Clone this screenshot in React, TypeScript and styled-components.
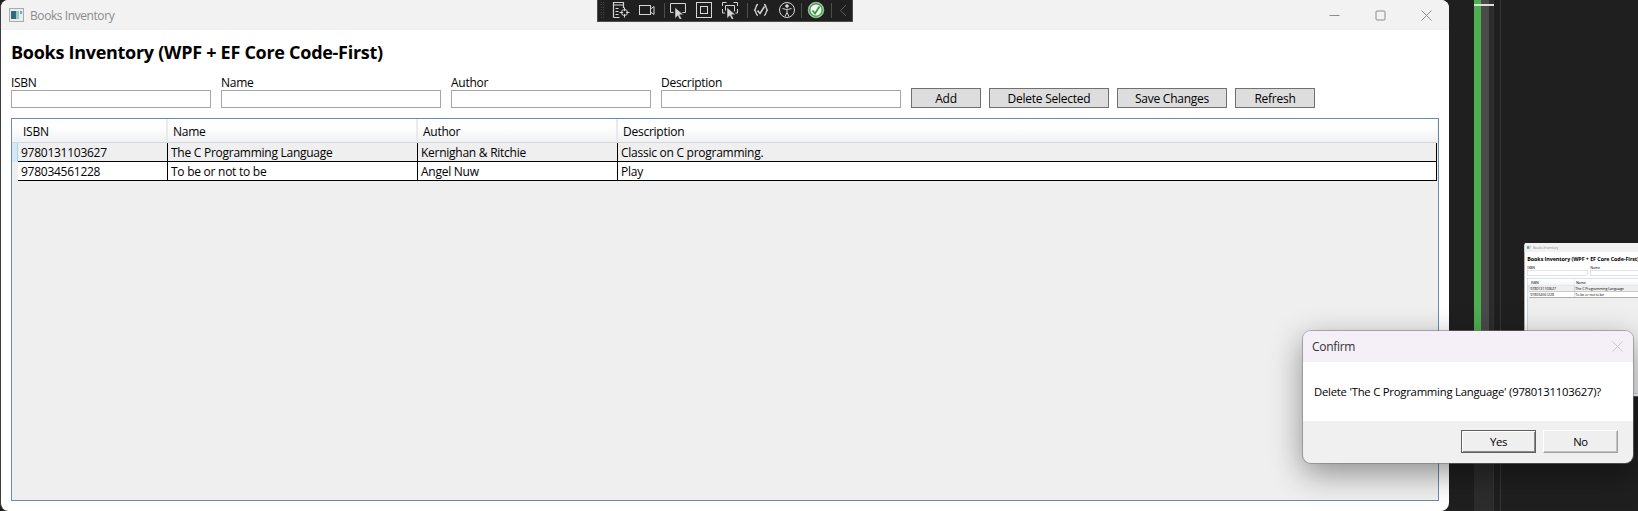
import React from 'react';
import styled, { createGlobalStyle } from 'styled-components';

const GlobalStyle = createGlobalStyle`
    html, body {
        margin: 0;
        padding: 0;
        background: #1f1f1f;
    }
    * {
        box-sizing: border-box;
    }
`;

const FONT = `'Open Sans', 'Noto Sans', sans-serif`;

const Page = styled.div`
    position: relative;
    display: flex;
    width: 1638px;
    height: 511px;
    overflow: hidden;
    background: #1f1f1f;
    font-family: ${FONT};
    font-size: 12px;
    color: #000;
`;

const Window = styled.div`
    display: flex;
    flex-direction: column;
    flex: none;
    width: 1449px;
    height: 511px;
    overflow: hidden;
    background: #fff;
    border-left: 1px solid #3c3c3c;
    border-radius: 8px;
`;

const TitleBar = styled.div`
    display: flex;
    align-items: center;
    flex: none;
    height: 30px;
    padding-left: 8px;
    background: #f2f2f2;
    color: #8b8b8b;
`;

const TitleText = styled.span`
    margin-left: 6px;
    letter-spacing: -0.42px;
`;

const WindowControls = styled.div`
    display: flex;
    align-items: center;
    gap: 35px;
    margin-left: auto;
    padding-right: 17px;
`;

const Body = styled.div`
    display: flex;
    flex-direction: column;
    flex: 1;
    min-height: 0;
    padding: 0 10px 10px 10px;
`;

const Heading = styled.h1`
    margin: 10px 0 0;
    height: 25px;
    font-size: 18px;
    line-height: 25px;
    font-weight: 700;
    letter-spacing: -0.28px;
`;

const FormRow = styled.div`
    display: flex;
    align-items: flex-end;
    margin-top: 9px;
`;

const Field = styled.label<{ $width: number }>`
    display: flex;
    flex-direction: column;
    width: ${p => p.$width}px;
    margin-right: 10px;
`;

const FieldLabel = styled.span`
    height: 16px;
    line-height: 18px;
    letter-spacing: -0.28px;
`;

const TextInput = styled.div`
    height: 18px;
    border: 1px solid #a6a6a6;
    background: #fff;
`;

const ActionButton = styled.div<{ $width: number }>`
    display: flex;
    align-items: center;
    justify-content: center;
    width: ${p => p.$width}px;
    height: 20px;
    margin-right: 8px;
    border: 1px solid #707070;
    background: #dddddd;
    letter-spacing: -0.25px;
`;

const Table = styled.div`
    display: flex;
    flex-direction: column;
    flex: 1;
    min-height: 0;
    margin-top: 10px;
    padding-right: 1px;
    border: 1px solid #688caf;
    background: #efefef;
`;

const Row = styled.div`
    display: flex;
`;

const RowHeader = styled.div<{ $active?: boolean }>`
    flex: none;
    width: 6px;
    background: ${p => (p.$active ? '#d4e8f6' : '#efefef')};
    border-right: 1px solid ${p => (p.$active ? '#a9d3ee' : '#efefef')};
`;

const HeaderCorner = styled.div`
    flex: none;
    width: 6px;
    background: linear-gradient(#fff 35%, #f0f1f3);
    border-bottom: 1px solid #d5d7da;
`;

const Columns = styled.div`
    display: grid;
    flex: 1;
    grid-template-columns: 150px 250px 200px 1fr;
`;

const HeaderCell = styled.div`
    height: 24px;
    padding-left: 5px;
    line-height: 25px;
    background: linear-gradient(#fff 35%, #f0f1f3);
    border-bottom: 1px solid #d5d7da;
    border-right: 2px solid #e9eaeb;
    letter-spacing: -0.25px;

    &:last-child {
        border-right: 0;
    }
`;

const Cell = styled.div<{ $selected?: boolean }>`
    height: 19px;
    padding-left: 3px;
    line-height: 20px;
    white-space: nowrap;
    overflow: hidden;
    background: ${p => (p.$selected ? '#efefef' : '#ffffff')};
    border-right: 1px solid #000;
    border-bottom: 1px solid #000;
    letter-spacing: -0.26px;
`;

const Toolbar = styled.div`
    position: absolute;
    top: 0;
    left: 597px;
    display: flex;
    align-items: flex-start;
    width: 256px;
    height: 22px;
    padding: 1px 0 0 2px;
    background: #1f1f1f;
    border: 1px solid #4d4d4d;
    border-top: 0;
`;

const Grip = styled.div`
    flex: none;
    width: 5px;
    height: 18px;
    margin-right: 7px;
    background-image: radial-gradient(#666 0.7px, transparent 0.8px);
    background-size: 2.5px 2.5px;
`;

const ToolIcon = styled.svg`
    flex: none;
    display: block;
    width: 18px;
    height: 18px;
    margin-right: 8px;
    fill: none;
    stroke: #d6d6d6;
    stroke-width: 1;
`;

const Chevron = styled.svg`
    flex: none;
    display: block;
    width: 10px;
    height: 18px;
    fill: none;
    stroke: #5c5c5c;
    stroke-width: 1;
`;

const ToolSeparator = styled.div<{ $before?: number; $after?: number }>`
    flex: none;
    width: 1px;
    height: 15px;
    margin: 2px ${p => p.$after ?? 4}px 0 ${p => p.$before ?? 0}px;
    background: #4d4d4d;
`;

const Side = styled.div`
    position: relative;
    flex: 1;
    height: 100%;
`;

const SideTrack = styled.div`
    position: absolute;
    top: 0;
    bottom: 0;
    left: 25px;
    width: 20px;
    background: #2c2c2c;
    border-right: 1px solid #333;
`;

const SideMeter = styled.div`
    display: flex;
    height: 400px;
`;

const MeterFill = styled.div<{ $color: string; $width: number }>`
    width: ${p => p.$width}px;
    background: ${p => p.$color};
`;

const SideDash = styled.div`
    position: absolute;
    top: 4px;
    left: 0;
    width: 20px;
    height: 2px;
    background: #dcdcdc;
`;

const SideLine = styled.div`
    position: absolute;
    top: 0;
    bottom: 0;
    left: 51px;
    width: 1px;
    background: #363636;
`;

const Thumbnail = styled.div`
    position: absolute;
    top: 243px;
    left: 1524px;
    width: 1449px;
    height: 511px;
    transform: scale(0.3);
    transform-origin: top left;
`;

const Dialog = styled.div`
    position: absolute;
    top: 331px;
    left: 1303px;
    display: flex;
    flex-direction: column;
    width: 330px;
    height: 132px;
    overflow: hidden;
    border-radius: 8px;
    background: #f0f0f0;
    font-size: 11.3px;
    box-shadow: 0 0 0 1px rgba(120, 120, 120, 0.55), 0 10px 32px rgba(0, 0, 0, 0.42);
`;

const DialogTitle = styled.div`
    display: flex;
    align-items: center;
    justify-content: space-between;
    flex: none;
    height: 31px;
    padding: 0 10px 0 9px;
    background: #f5eff7;
    color: #333;
    font-size: 12px;
    letter-spacing: -0.3px;
`;

const DialogMessage = styled.div`
    display: flex;
    align-items: center;
    flex: none;
    height: 59px;
    padding-left: 11px;
    background: #fff;
    letter-spacing: -0.23px;
`;

const DialogFooter = styled.div`
    display: flex;
    justify-content: flex-end;
    gap: 7px;
    padding: 9px 15px 0 0;
`;

const DialogButton = styled.div<{ $primary?: boolean }>`
    display: flex;
    align-items: center;
    justify-content: center;
    width: 75px;
    height: 23px;
    background: #efefef;
    letter-spacing: -0.3px;
    border: 1px solid ${p => (p.$primary ? '#5f5f5f' : '#a0a0a0')};
    border-top-color: ${p => (p.$primary ? '#5f5f5f' : '#fff')};
    border-left-color: ${p => (p.$primary ? '#5f5f5f' : '#fff')};
    box-shadow: ${p => (p.$primary ? 'inset 1px 1px 0 #fff, inset -1px -1px 0 #8a8a8a' : 'inset -1px -1px 0 #c4c4c4')};
`;

const WinGlyph = styled.svg<{ $color?: string }>`
    display: block;
    flex: none;
    width: 11px;
    height: 11px;
    fill: none;
    stroke: ${p => p.$color ?? '#8b8b8b'};
    stroke-width: 1;
`;

const AppIconSvg = styled.svg`
    display: block;
    flex: none;
    width: 15px;
    height: 14px;
`;

const AppIcon = () => (
    <AppIconSvg viewBox="0 0 15 14">
        <rect x="0.5" y="0.5" width="14" height="13" fill="#e9edf0" stroke="#a9acaf" />
        <rect x="2" y="3" width="5" height="8" fill="#2f6b78" />
        <rect x="7" y="3" width="3" height="8" fill="#9cc7c0" />
        <rect x="11" y="3" width="2" height="3" fill="#7aa6c4" />
    </AppIconSvg>
);

const books = [
    { isbn: '9780131103627', name: 'The C Programming Language', author: 'Kernighan & Ritchie', description: 'Classic on C programming.' },
    { isbn: '978034561228', name: 'To be or not to be', author: 'Angel Nuw', description: 'Play' },
];

const fields = [
    { label: 'ISBN', width: 200 },
    { label: 'Name', width: 220 },
    { label: 'Author', width: 200 },
    { label: 'Description', width: 240 },
];

const actions = [
    { label: 'Add', width: 70 },
    { label: 'Delete Selected', width: 120 },
    { label: 'Save Changes', width: 110 },
    { label: 'Refresh', width: 80 },
];

const InventoryWindow = () => (
    <Window>
        <TitleBar>
            <AppIcon />
            <TitleText>Books Inventory</TitleText>
            <WindowControls>
                <WinGlyph viewBox="0 0 11 11">
                    <path d="M0.5 5.5h10" />
                </WinGlyph>
                <WinGlyph viewBox="0 0 11 11">
                    <rect x="1" y="1" width="9" height="9" rx="1" />
                </WinGlyph>
                <WinGlyph viewBox="0 0 11 11">
                    <path d="M0.5 0.5l10 10M10.5 0.5l-10 10" />
                </WinGlyph>
            </WindowControls>
        </TitleBar>
        <Body>
            <Heading>Books Inventory (WPF + EF Core Code-First)</Heading>
            <FormRow>
                {fields.map(f => (
                    <Field key={f.label} $width={f.width}>
                        <FieldLabel>{f.label}</FieldLabel>
                        <TextInput />
                    </Field>
                ))}
                {actions.map(a => (
                    <ActionButton key={a.label} $width={a.width}>
                        {a.label}
                    </ActionButton>
                ))}
            </FormRow>
            <Table>
                <Row>
                    <HeaderCorner />
                    <Columns>
                        <HeaderCell>ISBN</HeaderCell>
                        <HeaderCell>Name</HeaderCell>
                        <HeaderCell>Author</HeaderCell>
                        <HeaderCell>Description</HeaderCell>
                    </Columns>
                </Row>
                {books.map((b, i) => (
                    <Row key={b.isbn}>
                        <RowHeader $active={i === 0} />
                        <Columns>
                            <Cell $selected={i === 0}>{b.isbn}</Cell>
                            <Cell $selected={i === 0}>{b.name}</Cell>
                            <Cell $selected={i === 0}>{b.author}</Cell>
                            <Cell $selected={i === 0}>{b.description}</Cell>
                        </Columns>
                    </Row>
                ))}
            </Table>
        </Body>
    </Window>
);

const CURSOR = 'M6 6.5v11l2.8-2.8 2 4 1.9-1-2-3.900h3.900z';

const App = () => (
    <Page>
        <GlobalStyle />
        <InventoryWindow />
        <Side>
            <SideTrack>
                <SideMeter>
                    <MeterFill $color="#4caf50" $width={7} />
                    <MeterFill $color="#4a4a4a" $width={8} />
                </SideMeter>
                <SideDash />
            </SideTrack>
            <SideLine />
        </Side>
        <Thumbnail>
            <InventoryWindow />
        </Thumbnail>
        <Toolbar>
            <Grip />
            <ToolIcon viewBox="0 0 18 18">
                <path d="M1.5 16.500v-15h10v5.500M1.500 4h10" strokeWidth="1.200" />
                <path d="M3.500 7.500h3M3.500 10.500h3M3.500 13.500h3M1.500 16.500h6" />
                <circle cx="12.500" cy="11.500" r="3" />
                <path d="M12.500 6.500v3.500M12.500 13v3.500M7.500 11.500h3.500M14 11.500h3.500" />
            </ToolIcon>
            <ToolIcon viewBox="0 0 18 18">
                <rect x="1.500" y="4.500" width="11" height="9" />
                <path d="M12.500 8l3.500-2.500v8l-3.500-2.500" />
            </ToolIcon>
            <ToolSeparator />
            <ToolIcon viewBox="0 0 18 18">
                <path d="M4.500 11.500h-3v-9h15v9h-3" />
                <path d={CURSOR} fill="#d6d6d6" stroke="#1f1f1f" strokeWidth="0.500" />
            </ToolIcon>
            <ToolIcon viewBox="0 0 18 18">
                <rect x="1.500" y="1.500" width="15" height="15" />
                <rect x="5.500" y="5.500" width="7" height="7" />
            </ToolIcon>
            <ToolIcon viewBox="0 0 18 18">
                <path d="M1.500 5v-3.500h4M12.500 1.500h4V5M1.500 8v4h2.500M16.500 8v4h-2M4.500 9.500v-5h9v6" />
                <path d={CURSOR} fill="#d6d6d6" stroke="#1f1f1f" strokeWidth="0.500" />
            </ToolIcon>
            <ToolSeparator />
            <ToolIcon viewBox="0 0 18 18">
                <path d="M6 3.500c-2.500 0-1.500 3.500-3 5-.7.300-.7.700 0 1 1.500 1.500.5 5 3 5M12 3.500c2.500 0 1.500 3.500 3 5 .7.300.7.700 0 1-1.500 1.500-.5 5-3 5" strokeWidth="1.300" />
                <path d="M5.500 9.500l2.500 3 4.500-7" strokeWidth="1.500" />
            </ToolIcon>
            <ToolIcon viewBox="0 0 18 18">
                <circle cx="9" cy="9" r="7.500" />
                <circle cx="9" cy="5" r="1.300" fill="#d6d6d6" />
                <path d="M4.500 7.500l3 .8h3l3-.8M9 8.500v3M9 11.500l-2 4M9 11.500l2 4" />
            </ToolIcon>
            <ToolSeparator $before={-3} $after={5} />
            <ToolIcon viewBox="0 0 18 18">
                <circle cx="9" cy="9" r="7.800" fill="#e4f1e4" stroke="#9ab79c" strokeWidth="0.800" />
                <circle cx="9" cy="9" r="6.300" fill="#f4f9f4" stroke="#3f9f49" strokeWidth="1.500" />
                <path d="M5.500 9.500l2.500 3 4.500-7" stroke="#2e9a3c" strokeWidth="1.700" />
            </ToolIcon>
            <ToolSeparator $before={-2} $after={6} />
            <Chevron viewBox="0 0 10 18">
                <path d="M8 4L2.500 9.500 8 15" />
            </Chevron>
        </Toolbar>
        <Dialog>
            <DialogTitle>
                Confirm
                <WinGlyph viewBox="0 0 11 11" $color="#c8c8c8">
                    <path d="M0.5 0.5l10 10M10.500 0.500l-10 10" />
                </WinGlyph>
            </DialogTitle>
            <DialogMessage>Delete 'The C Programming Language' (9780131103627)?</DialogMessage>
            <DialogFooter>
                <DialogButton $primary>Yes</DialogButton>
                <DialogButton>No</DialogButton>
            </DialogFooter>
        </Dialog>
    </Page>
);

export default App;
